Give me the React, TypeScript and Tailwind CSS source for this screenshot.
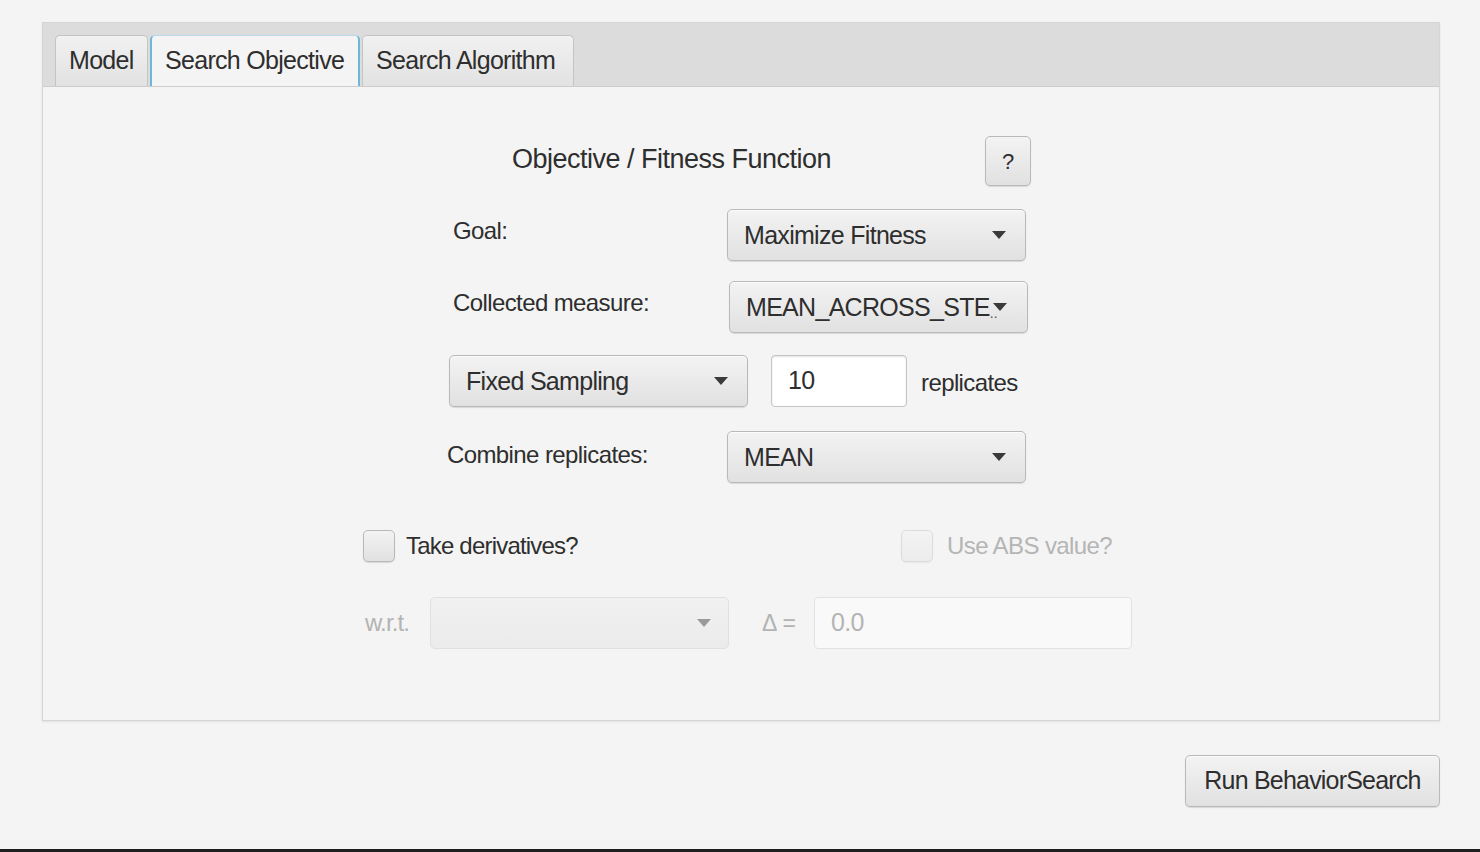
import React from "react";

const font = "font-['Liberation_Sans',Arial,sans-serif]";

function Arrow({ dim = false }: { dim?: boolean }) {
  return (
    <svg width="14" height="8" viewBox="0 0 14 8" className="shrink-0">
      <path d="M0 0 L14 0 L7 8 Z" fill={dim ? "#9a9a9a" : "#3a3a3a"} />
    </svg>
  );
}

function Combo({
  text,
  width,
  disabled = false,
  children,
}: {
  text?: string;
  width: string;
  disabled?: boolean;
  children?: React.ReactNode;
}) {
  return (
    <div
      className={`${width} h-[52px] flex items-center justify-between pl-[16px] pr-[19px] rounded-[5px] border border-[#b9b9b9] bg-gradient-to-b from-[#f3f3f3] to-[#e1e1e1] shadow-[0_1px_1px_rgba(0,0,0,0.12),inset_0_1px_0_#fbfbfb] ${
        disabled ? "opacity-40" : ""
      }`}
    >
      <span className="text-[25px] tracking-[-0.7px] text-[#2e2e2e] whitespace-nowrap mt-[2px]">
        {children ?? text}
      </span>
      <Arrow />
    </div>
  );
}

function Field({ value, width, disabled = false }: { value: string; width: string; disabled?: boolean }) {
  return (
    <div
      className={`${width} h-[52px] flex items-center pl-[16px] rounded-[4px] border ${
        disabled ? "border-[#e2e2e2] bg-[#f9f9f9] text-[#b4b4b4]" : "border-[#c4c4c4] bg-white text-[#2e2e2e] shadow-[inset_0_1px_2px_rgba(0,0,0,0.12)]"
      } text-[25px] tracking-[-0.7px]`}
    >
      {value}
    </div>
  );
}

function Checkbox({ disabled = false }: { disabled?: boolean }) {
  return (
    <div
      className={`w-[32px] h-[32px] shrink-0 rounded-[5px] border border-[#b9b9b9] bg-gradient-to-b from-[#f3f3f3] to-[#e1e1e1] shadow-[0_1px_1px_rgba(0,0,0,0.12)] ${
        disabled ? "opacity-40" : ""
      }`}
    />
  );
}

function Tab({ label, active = false, width }: { label: string; active?: boolean; width: string }) {
  return (
    <div
      className={`${width} h-[51px] flex items-center pl-[13px] rounded-t-[5px] text-[25px] tracking-[-0.7px] text-[#2e2e2e] ${
        active
          ? "bg-[#f4f4f4] border-x-2 border-t border-x-[#6eb6da] border-t-[#b9d9ea]"
          : "bg-gradient-to-b from-[#f1f1f1] to-[#e2e2e2] border border-b-0 border-[#c4c4c4]"
      }`}
    >
      {label}
    </div>
  );
}

export default function App() {
  return (
    <div className={`w-[1480px] h-[852px] bg-[#f4f4f4] flex flex-col ${font}`}>
      <div className="ml-[42px] mt-[22px] w-[1398px] h-[699px] flex flex-col border border-[#d5d5d5] shadow-[0_1px_2px_rgba(0,0,0,0.08)]">
        {/* tab header */}
        <div className="h-[64px] bg-[#dcdcdc] border-b border-[#cdcdcd] flex items-end gap-[2px] pl-[12px]">
          <Tab label="Model" width="w-[93px]" />
          <Tab label="Search Objective" width="w-[210px]" active />
          <Tab label="Search Algorithm" width="w-[212px]" />
        </div>

        {/* content */}
        <div className="flex-1 bg-[#f4f4f4]">
          <div className="ml-[320px] w-[770px] flex flex-col text-[#2e2e2e]">
            <div className="mt-[49px] h-[50px] flex items-center">
              <span className="ml-[149px] text-[27px] tracking-[-0.5px] -mt-[4px]">
                Objective / Fitness Function
              </span>
              <div className="ml-auto mr-[102px] w-[46px] h-[50px] flex items-center justify-center rounded-[5px] border border-[#b9b9b9] bg-gradient-to-b from-[#f3f3f3] to-[#e1e1e1] shadow-[0_1px_1px_rgba(0,0,0,0.12)] text-[22px]">
                ?
              </div>
            </div>

            <div className="mt-[23px] flex items-center">
              <span className="ml-[90px] w-[274px] text-[24px] tracking-[-0.6px] -mt-[8px]">Goal:</span>
              <Combo text="Maximize Fitness" width="w-[299px]" />
            </div>

            <div className="mt-[20px] flex items-center">
              <span className="ml-[90px] w-[276px] text-[24px] tracking-[-0.6px] -mt-[8px]">Collected measure:</span>
              <div className="w-[299px] h-[52px] flex items-center pl-[16px] pr-[19px] rounded-[5px] border border-[#b9b9b9] bg-gradient-to-b from-[#f3f3f3] to-[#e1e1e1] shadow-[0_1px_1px_rgba(0,0,0,0.12),inset_0_1px_0_#fbfbfb]">
                <span className="text-[25px] tracking-[-0.7px] whitespace-nowrap mt-[2px]">MEAN_ACROSS_STE</span>
                <span className="text-[14px] text-[#555] mt-[12px]">..</span>
                <span className="-ml-[5px]">
                  <Arrow />
                </span>
              </div>
            </div>

            <div className="mt-[22px] flex items-center">
              <span className="ml-[86px]" />
              <Combo text="Fixed Sampling" width="w-[299px]" />
              <span className="ml-[23px]" />
              <Field value="10" width="w-[136px]" />
              <span className="ml-[14px] text-[24px] tracking-[-0.6px] mt-[4px]">replicates</span>
            </div>

            <div className="mt-[24px] flex items-center">
              <span className="ml-[84px] w-[280px] text-[24px] tracking-[-0.6px] -mt-[4px]">Combine replicates:</span>
              <Combo text="MEAN" width="w-[299px]" />
            </div>

            <div className="mt-[45px] flex items-center">
              <div className="w-[538px] flex items-center">
                <Checkbox />
                <span className="ml-[11px] text-[24px] tracking-[-0.8px]">Take derivatives?</span>
              </div>
              <Checkbox disabled />
              <span className="ml-[14px] text-[24px] tracking-[-0.6px] text-[#b5b5b5] whitespace-nowrap">
                Use ABS value?
              </span>
            </div>

            <div className="mt-[33px] flex items-center">
              <span className="ml-[2px] w-[65px] text-[24px] tracking-[-0.9px] text-[#b3b3b3]">w.r.t.</span>
              <div className="w-[299px] h-[52px] flex items-center justify-end pr-[17px] rounded-[5px] border border-[#e0e0e0] bg-gradient-to-b from-[#f1f1f1] to-[#ebebeb]">
                <Arrow dim />
              </div>
              <span className="ml-[33px] w-[52px] text-[23px] text-[#b3b3b3]">Δ =</span>
              <Field value="0.0" width="w-[318px]" disabled />
            </div>
          </div>
        </div>
      </div>

      <div className="mt-[34px] flex justify-end pr-[40px]">
        <div className="w-[255px] h-[52px] flex items-center justify-center rounded-[5px] border border-[#b9b9b9] bg-gradient-to-b from-[#f3f3f3] to-[#e1e1e1] shadow-[0_1px_1px_rgba(0,0,0,0.12),inset_0_1px_0_#fbfbfb] text-[25px] tracking-[-0.8px] text-[#2e2e2e]">
          Run BehaviorSearch
        </div>
      </div>

      <div className="mt-auto h-[3px] bg-[#1e1e1e]" />
    </div>
  );
}
